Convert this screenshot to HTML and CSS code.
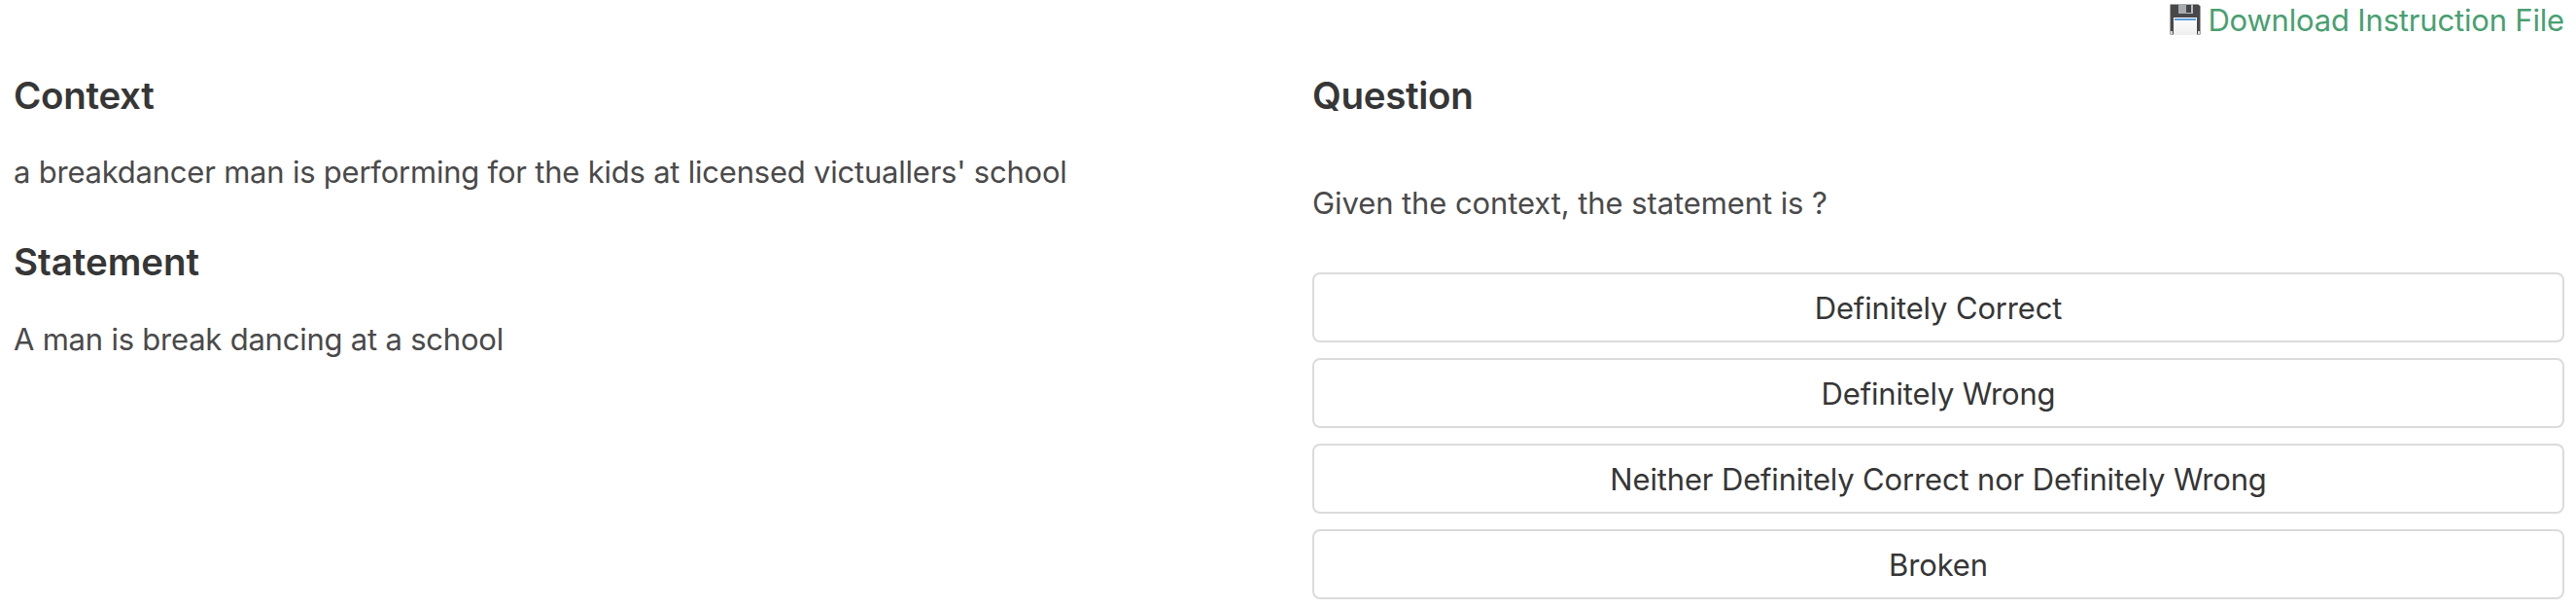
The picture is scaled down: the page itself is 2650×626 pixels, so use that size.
FILE: index.html
```
<!DOCTYPE html>
<html lang="en">
<head>
    <meta charset="UTF-8">
    <meta name="viewport" content="width=device-width, initial-scale=1.0">
    <title>Context and Statement</title>
    <link rel="stylesheet" href="styles.css">
</head>
<body>
    <div class="toolbar">
        <a class="download" href="#">
            <svg class="floppy" viewBox="0 0 32 32">
                <defs>
                    <linearGradient id="label" x1="0" y1="0" x2="0" y2="1">
                        <stop offset="0" stop-color="#ffffff"/>
                        <stop offset="1" stop-color="#eeeef0"/>
                    </linearGradient>
                </defs>
                <path d="M0.5 0.5H29.5L31.5 2.5V31.5H0.5Z" fill="#48484a"/>
                <rect x="9" y="0" width="15" height="10" fill="#b9bcbe"/>
                <rect x="9" y="0" width="8" height="10" fill="#a9acae"/>
                <rect x="17" y="1" width="5" height="8" fill="#444446"/>
                <rect x="4" y="14" width="24" height="18" fill="url(#label)"/>
                <rect x="5" y="15" width="22" height="2" fill="#5b9bd8"/>
                <rect x="1" y="28" width="2" height="3" fill="#d8d8d8"/>
                <rect x="29" y="28" width="2" height="3" fill="#d8d8d8"/>
            </svg>
            <span class="download-text">Download Instruction File</span>
        </a>
    </div>
    <div class="columns">
        <div class="column">
            <h2 class="title title-context">Context</h2>
            <p class="text text-context">a breakdancer man is performing for the kids at licensed victuallers' school</p>
            <h2 class="title title-statement">Statement</h2>
            <p class="text text-statement">A man is break dancing at a school</p>
        </div>
        <div class="column">
            <h2 class="title title-question">Question</h2>
            <p class="text text-question">Given the context, the statement is ?</p>
            <div class="buttons">
                <button class="button">Definitely Correct</button>
                <button class="button">Definitely Wrong</button>
                <button class="button">Neither Definitely Correct nor Definitely Wrong</button>
                <button class="button">Broken</button>
            </div>
        </div>
    </div>
</body>
</html>
```
FILE: styles.css
```
body {
    margin: 0;
    background-color: #fff;
    color: #4a4a4a;
    font-family: Inter, sans-serif;
    font-size: 31px;
    line-height: 48px;
    overflow: hidden;
}
.toolbar {
    display: flex;
    justify-content: flex-end;
    height: 42px;
    padding-right: 12px;
    line-height: 42px;
}
.download {
    display: flex;
    color: #48a070;
    text-decoration: none;
    letter-spacing: -0.18px;
}
.floppy {
    width: 32px;
    height: 32px;
    margin: 4px 7px 0 0;
}
.columns {
    display: grid;
    grid-template-columns: 1288px 1288px;
    column-gap: 48px;
    padding: 34px 12px 0 14px;
}
.title {
    margin: 0 0 32px;
    color: #363636;
    font-size: 38.5px;
    font-weight: 600;
    line-height: 45px;
    letter-spacing: -0.3px;
}
.text {
    margin: 0;
    letter-spacing: -0.22px;
}
.title-statement {
    margin-top: 46px;
    margin-bottom: 33px;
    letter-spacing: -0.05px;
}
.title-question {
    margin-bottom: 64px;
}
.text-question {
    letter-spacing: -0.09px;
}
.buttons {
    display: flex;
    flex-direction: column;
    gap: 16px;
    margin-top: 47px;
}
.button {
    height: 72px;
    padding: 2px 0 0;
    border: 2px solid #dbdbdb;
    border-radius: 8px;
    background-color: #fff;
    color: #363636;
    font: inherit;
    letter-spacing: -0.16px;
}
```
